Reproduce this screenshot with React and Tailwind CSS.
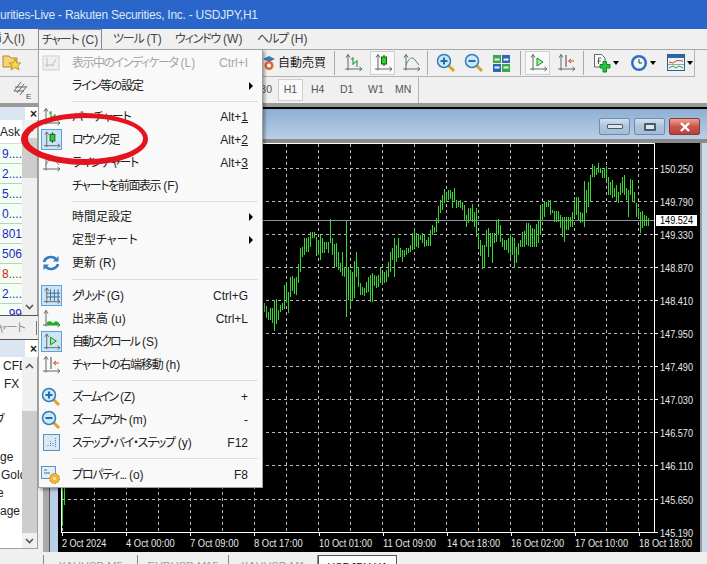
import React from "react";

const jp = "font-['Liberation_Sans','Noto_Sans_CJK_JP',sans-serif] [font-feature-settings:'palt']";

const raw1 = [[14,490,515],[20,498,535],[26,515,540],[32,505,540],[38,505,550],[44,480,572],[50,478,552],[56,510,540],[62,495,515],[68,490,510],[74,435,508],[80,425,490],[86,455,518],[92,410,470],[98,408,452],[104,415,462],[110,410,465],[116,372,428],[122,325,395],[128,320,350],[134,295,345],[140,295,335],[146,290,335],[152,277,320],[158,277,295],[164,277,295],[170,290,348],[176,300,345],[182,285,360],[188,295,340],[194,305,340],[200,305,328],[206,305,340],[212,237,310],[218,295,345],[224,312,380],[230,310,380],[236,335,390],[242,370,395],[248,335,408],[254,380,410],[260,243,530],[266,380,480],[272,390,502],[278,395,480],[284,362,475],[290,335,410],[296,380,440],[302,430,465],[308,440,465],[314,445,468],[320,425,460],[326,410,455],[332,405,485],[338,400,485],[344,405,438],[350,408,445],[356,405,440],[362,385,430],[368,400,432],[374,395,430],[380,390,425],[386,365,410],[392,335,395],[398,325,360],[404,295,412],[410,315,365],[416,295,355],[422,325,350],[428,330,365],[434,330,350],[440,325,345],[446,325,340],[452,315,335],[458,280,330],[464,268,325],[470,280,320],[476,285,325],[482,285,300],[488,280,310],[494,285,320],[500,300,318],[506,290,318],[512,270,318],[518,255,285],[524,260,280],[530,235,275],[536,198,250],[542,180,220],[548,165,210],[554,148,190],[560,155,185],[566,150,180],[572,150,178],[578,155,205],[584,145,185],[590,180,205],[596,185,200],[602,180,205],[608,185,210],[614,195,240],[620,225,260],[626,205,250],[632,205,240],[638,192,245],[644,215,262],[650,205,290],[656,280,322]];
const raw2 = [[0,300,348],[6,315,388],[12,315,385],[18,270,320],[24,265,350],[30,280,320],[36,280,368],[42,280,310],[48,240,305],[54,238,285],[60,255,305],[66,295,320],[72,300,330],[78,300,330],[84,295,340],[90,282,355],[96,290,345],[102,295,385],[108,320,370],[114,310,345],[120,300,320],[126,275,320],[132,272,320],[138,248,315],[144,250,318],[150,255,320],[156,265,320],[162,268,322],[168,252,322],[174,240,310],[180,195,285],[186,195,240],[192,183,230],[198,185,200],[204,180,200],[210,180,225],[216,210,220],[222,213,245],[228,212,245],[234,213,245],[240,225,265],[246,230,290],[252,232,305],[258,230,270],[264,232,270],[270,232,260],[276,215,260],[282,170,230],[288,170,225],[294,170,240],[300,215,250],[306,220,245],[312,122,262],[318,150,218],[324,125,200],[330,105,185],[336,72,112],[342,78,110],[348,85,105],[354,70,100],[360,85,100],[366,90,115],[372,85,115],[378,78,120],[384,110,165],[390,125,165],[396,120,175],[402,145,170],[408,135,185],[414,155,190],[420,130,165],[426,110,160],[432,105,165],[438,145,180],[444,150,232],[450,118,165],[456,120,185],[462,155,190],[468,190,232],[474,205,235],[480,215,278],[486,212,265],[492,225,258],[498,228,258],[504,235,258]];

const bars = [
  [62, 488, 526],
  [64, 488, 505],
  ...raw1.map(([x, a, b]) => [260 + x / 3, 140 + a / 3, 140 + b / 3]),
  ...raw2.map(([x, a, b]) => [480 + x / 3, 140 + a / 3, 140 + b / 3]),
];

const prices = ["150.250","149.790","149.330","148.870","148.410","147.950","147.490","147.030","146.570","146.110","145.650","145.190"];
const times = [["2 Oct 2024",61],["4 Oct 00:00",125],["7 Oct 09:00",189],["8 Oct 17:00",253],["10 Oct 01:00",318],["11 Oct 09:00",382],["14 Oct 18:00",446],["16 Oct 02:00",510],["17 Oct 10:00",574],["18 Oct 18:00",638]];
const vlines = Array.from({ length: 19 }, (_, i) => 62.5 + i * 32);

function Chart() {
  return (
    <svg width="642" height="409" viewBox="58 143 642 409" className="block shrink-0" style={{ fontFamily: "'Liberation Sans', sans-serif" }}>
      <rect x="58" y="143" width="642" height="409" fill="#000" />
      {vlines.map((x) => (
        <line key={x} x1={x} x2={x} y1="144" y2="532" stroke="#b8b8b8" strokeDasharray="3 3" />
      ))}
      {prices.map((_, i) => {
        const y = Math.round(168 + i * 33.05) + 0.5;
        return <line key={i} x1="62" x2="654" y1={y} y2={y} stroke="#b8b8b8" strokeDasharray="3 3" />;
      })}
      <line x1="62" x2="654" y1="220.5" y2="220.5" stroke="#8a94a0" />
      <path d={bars.map(([x, a, b]) => `M${Math.floor(x / 2) * 2 + 0.5} ${Math.round(a)}V${Math.round(b)}`).join("")} stroke="#33d92f" fill="none" />
      <rect x="61.5" y="143.5" width="593" height="389" fill="none" stroke="#fff" />
      {prices.map((p, i) => {
        const y = Math.round(168 + i * 33.05) + 0.5;
        return (
          <g key={p}>
            <line x1="654" x2="658" y1={y} y2={y} stroke="#fff" />
            <text x="660" y={y + 4} fill="#e8e8e8" fontSize="10" textLength="33" lengthAdjust="spacingAndGlyphs">{p}</text>
          </g>
        );
      })}
      <rect x="656" y="215" width="41" height="11" fill="#fff" />
      <text x="660" y="224" fill="#000" fontSize="10" textLength="33" lengthAdjust="spacingAndGlyphs">149.524</text>
      {times.map(([t, x]) => (
        <g key={t}>
          <line x1={x + 1.5} x2={x + 1.5} y1="532" y2="536" stroke="#fff" />
          <text x={x + 1} y="547" fill="#e8e8e8" fontSize="10" textLength={t.length * 4.42} lengthAdjust="spacingAndGlyphs">{t}</text>
        </g>
      ))}
    </svg>
  );
}

const Axis = ({ children, c = "#5a6a6a" }) => (
  <svg width="20" height="20" viewBox="0 0 20 20" fill="none">
    <path d="M5 1.5V17.5M2 16H19M3 4.5L5 1.5L7 4.5M16.5 14L19 16L16.5 18" stroke={c} strokeWidth="1" />
    {children}
  </svg>
);
const BarI = () => <Axis><path d="M10 4V12M8 6H10M10 10H12M14 7V14M12 9H14" stroke="#1c8a1c" /></Axis>;
const CandleI = () => <Axis><path d="M11 2V13" stroke="#222" /><rect x="8.5" y="4" width="5" height="7" fill="#2bd42b" stroke="#145a14" /></Axis>;
const LineI = () => <Axis><path d="M5 12C8 5 11 3 14 7L18 12" stroke="#5a8a5a" /></Axis>;
const GridI = () => <Axis><path d="M9 3V15M13 3V15M17 3V15M5 7H19M5 11H19" stroke="#3a6a8a" /></Axis>;
const VolI = () => <Axis><path d="M6 16V13L9 12L12 14L15 12L18 14V16Z" fill="#19b319" /></Axis>;
const AutoI = () => <Axis><path d="M9 5V13L15 9Z" fill="#9bf09b" stroke="#1c8a1c" /></Axis>;
const ShiftI = () => <Axis><path d="M10 2V14" stroke="#444" /><path d="M18 8H13M15 6L12.5 8L15 10" stroke="#d2401c" /></Axis>;

const ZoomI = ({ minus }) => (
  <svg width="20" height="20" viewBox="0 0 20 20" fill="none">
    <path d="M12 12L18 18" stroke="#d6a52a" strokeWidth="3" />
    <circle cx="8" cy="8" r="6.5" fill="#cfe8f8" stroke="#2f7fb8" strokeWidth="1.5" />
    <path d={minus ? "M4.5 8H11.5" : "M4.5 8H11.5M8 4.5V11.5"} stroke="#1f6ea8" strokeWidth="2" />
  </svg>
);
const TileI = () => (
  <svg width="17" height="17" viewBox="0 0 17 17">
    <rect width="8" height="8" fill="#3da84a" /><rect x="9" width="8" height="8" fill="#2f66b8" />
    <rect y="9" width="8" height="8" fill="#2f66b8" /><rect x="9" y="9" width="8" height="8" fill="#3da84a" />
    <path d="M1.5 3.5H6.5V5.5H1.5ZM10.5 3.5H15.5V5.5H10.5ZM1.5 11.5H6.5V13.5H1.5ZM10.5 11.5H15.5V13.5H10.5Z" fill="#eef5ee" />
  </svg>
);
const RefreshI = () => (
  <svg width="18" height="18" viewBox="0 0 18 18" fill="none" stroke="#2f7fc0" strokeWidth="2.5">
    <path d="M2 8C3 3.5 10 1 14 5" /><path d="M16 10C15 14.5 8 17 4 13" />
    <path d="M16.5 2V7.5H11Z" fill="#2f7fc0" stroke="none" /><path d="M1.5 16V10.5H7Z" fill="#2f7fc0" stroke="none" />
  </svg>
);
const StepI = () => (
  <svg width="17" height="17" viewBox="0 0 17 17" fill="none">
    <rect x="0.5" y="0.5" width="16" height="16" fill="#dce9f6" stroke="#5a8fc4" />
    <path d="M5 11V13M7.5 7V13M10 9V13M12.5 4V13" stroke="#4a7fb5" strokeDasharray="1 1" />
  </svg>
);
const PropI = () => (
  <svg width="20" height="20" viewBox="0 0 20 20" fill="none">
    <rect x="0.5" y="1.5" width="14" height="12" fill="#e2eefa" stroke="#5a8fc4" />
    <path d="M3 5H6M3 8H9" stroke="#3a6fa5" />
    <circle cx="13.5" cy="13.5" r="5" fill="#efb52e" stroke="#c98a14" strokeDasharray="2 1" />
    <circle cx="13.5" cy="13.5" r="1.8" fill="#f8e4a8" />
  </svg>
);
const IndI = () => (
  <svg width="18" height="18" viewBox="0 0 18 18" fill="none" opacity="0.45">
    <rect x="1" y="2" width="16" height="14" fill="#e6e6e6" stroke="#9a9a9a" />
    <path d="M5 4V13M3 11H12M10 12L14 5" stroke="#777" />
  </svg>
);
const FolderI = () => (
  <svg width="20" height="20" viewBox="0 0 20 20">
    <path d="M1 3H7L9 5H15V14H1Z" fill="#f3d37a" stroke="#b8862a" />
    <path d="M13 6L14.8 10H19L15.7 12.6L17 17L13 14.4L9 17L10.3 12.6L7 10H11.2Z" fill="#f6d84a" stroke="#c09a20" />
  </svg>
);
const RobotI = () => (
  <svg width="14" height="16" viewBox="0 0 14 16">
    <path d="M1 4L7 1L13 4L7 7Z" fill="#3b78b8" />
    <circle cx="7" cy="10.5" r="4.5" fill="#e2622a" /><circle cx="7" cy="10.5" r="2" fill="#fff" />
  </svg>
);
const NewI = () => (
  <svg width="18" height="20" viewBox="0 0 18 20" fill="none">
    <path d="M1.5 1.5H8.5L12 5V14H1.5Z" fill="#fafafa" stroke="#666" />
    <path d="M5.5 11V5H8M4.5 8H7.5" stroke="#555" />
    <path d="M7 11.5H10V8.5H13.5V11.5H17V15H13.5V19H10V15H7Z" fill="#22c73a" stroke="#0f8a22" />
  </svg>
);
const ClockI = () => (
  <svg width="18" height="18" viewBox="0 0 18 18" fill="none">
    <circle cx="9" cy="9" r="8" fill="#2a72c0" />
    <circle cx="9" cy="9" r="5.5" fill="#f2f6fb" />
    <path d="M9 5V9H12" stroke="#333" />
  </svg>
);
const IndI2 = () => (
  <svg width="18" height="18" viewBox="0 0 18 18" fill="none">
    <rect x="0.5" y="0.5" width="17" height="16" fill="#eef3f7" stroke="#2f5f96" />
    <rect x="1" y="1" width="16" height="3" fill="#2f66a8" />
    <path d="M2 8L6 9L10 6.5L16 7" stroke="#c64c2a" /><path d="M2 14L6 12L9 14L12 12L16 14" stroke="#3a9a3a" />
    <path d="M1 10.5H17" stroke="#8aa" />
  </svg>
);
const Caret = ({ cls = "ml-[2px]" }) => <span className={`${cls} h-0 w-0 border-x-[3px] border-t-[4px] border-x-transparent border-t-black`} />;
const Sep = ({ cls = "" }) => <span className={`h-[24px] w-px bg-[#a8a8a8] ${cls}`} />;
const Active = ({ children, w = "w-[25px]", h = "h-[24px]" }) => (
  <span className={`flex ${w} ${h} items-center justify-center border border-[#cfcfcf] bg-[#f9f9f9]`}>{children}</span>
);

const Row = ({ icon, label, hint, right, muted, arrow, boxed, tr = "" }) => (
  <div className={`flex h-[23px] items-center ${muted ? "text-[#a6a6a6]" : "text-[#222]"}`}>
    <span className="flex w-[24px] shrink-0 items-center justify-center">
      {icon && (
        <span className={`flex h-[21px] w-[21px] items-center justify-center ${boxed ? "border border-[#5aa3dc] bg-[#cde4f7]" : ""}`}>{icon}</span>
      )}
    </span>
    <span className="ml-[9px] flex-1 whitespace-pre"><span className={tr}>{label}</span>{hint && <span className="ml-[3px]">{hint}</span>}</span>
    {right && <span className="mr-[14px] whitespace-nowrap">{right}</span>}
    {arrow && <span className="mr-[9px] h-0 w-0 border-y-[4px] border-l-[4px] border-y-transparent border-l-black" />}
  </div>
);
const MenuSep = ({ cls }) => (
  <div className={`flex ${cls} items-center pl-[33px] pr-[4px]`}><div className="h-px w-full bg-[#dcdcdc]" /></div>
);

function ChartMenu() {
  return (
    <div className={`absolute left-[38px] top-[49px] h-[439px] w-[225px] border border-[#a0a0a0] bg-[#f9f9f9] pt-px text-[12px] shadow-[2px_2px_3px_rgba(0,0,0,0.35)] ${jp}`}>
      <Row muted icon={<IndI />} tr="tracking-[-1.5px]" label="表示中のインディケータ" hint="(L)" right="Ctrl+I" />
      <Row tr="tracking-[-1.2px]" label="ライン等の設定" arrow />
      <MenuSep cls="h-[8px]" />
      <Row icon={<BarI />} tr="tracking-[-1px]" label="バーチャート" right={<>Alt+<u>1</u></>} />
      <Row icon={<CandleI />} boxed tr="tracking-[-1.7px]" label="ロウソク足" right={<>Alt+<u>2</u></>} />
      <Row icon={<LineI />} tr="tracking-[-1px]" label="ラインチャート" right={<>Alt+<u>3</u></>} />
      <Row tr="tracking-[-1.4px]" label="チャートを前面表示" hint="(F)" />
      <MenuSep cls="h-[8px]" />
      <Row label="時間足設定" arrow />
      <Row label="定型チャート" arrow />
      <Row icon={<RefreshI />} label="更新" hint="(R)" />
      <MenuSep cls="h-[10px]" />
      <Row icon={<GridI />} boxed tr="tracking-[-2px]" label="グリッド" hint="(G)" right="Ctrl+G" />
      <Row icon={<VolI />} label="出来高" hint="(u)" right="Ctrl+L" />
      <Row icon={<AutoI />} boxed tr="tracking-[-1.9px]" label="自動スクロール" hint="(S)" />
      <Row icon={<ShiftI />} tr="tracking-[-1.2px]" label="チャートの右端移動" hint="(h)" />
      <MenuSep cls="h-[9px]" />
      <Row icon={<ZoomI />} tr="tracking-[-2px]" label="ズームイン" hint="(Z)" right="+" />
      <Row icon={<ZoomI minus />} tr="tracking-[-1.9px]" label="ズームアウト" hint="(m)" right="-" />
      <Row icon={<StepI />} tr="tracking-[-1.3px]" label="ステップ・バイ・ステップ" hint="(y)" right="F12" />
      <MenuSep cls="h-[9px]" />
      <Row icon={<PropI />} tr="tracking-[-1.2px]" label="プロパティ..." hint="(o)" right="F8" />
    </div>
  );
}

const ChevUp = () => <svg width="9" height="6" viewBox="0 0 9 6" fill="none"><path d="M1 5L4.5 1.5L8 5" stroke="#555" strokeWidth="1.6" /></svg>;
const ChevDown = () => <svg width="9" height="6" viewBox="0 0 9 6" fill="none"><path d="M1 1L4.5 4.5L8 1" stroke="#555" strokeWidth="1.6" /></svg>;

const asks = [["9....","#1f1fc8"],["2....","#1f1fc8"],["5....","#1f1fc8"],["0....","#1f1fc8"],["801","#1f1fc8"],["506","#1f1fc8"],["8....","#d01818"],["2....","#1f1fc8"],["99","#1f1fc8"]];

function Panel() {
  return (
    <div className={`flex w-[38px] shrink-0 flex-col overflow-hidden bg-[#f0f0f0] text-[12px] text-[#222] ${jp}`}>
      <div className="flex h-[13px] shrink-0 items-center bg-white">
        <div className="h-full w-[25px] bg-[#dbe6f2]" />
        <span className="ml-[5px] text-[12px] font-bold leading-none">×</span>
      </div>
      <div className="flex h-[195px] shrink-0 overflow-hidden">
        <div className="w-[22px] overflow-hidden bg-white">
          <div className="flex h-[24px] items-center border-b border-[#d8d8d8] whitespace-nowrap">Ask</div>
          {asks.map(([a, c], i) => (
            <div key={i} className="flex h-[20px] items-center justify-end border-b border-[#c8c8c8] bg-[#f4fff4] whitespace-nowrap" style={{ color: c }}>{a}</div>
          ))}
        </div>
        <div className="flex w-[15px] flex-col items-center bg-[#f0f0f0]">
          <div className="flex h-[18px] shrink-0 items-center"><ChevUp /></div>
          <div className="h-[40px] w-full bg-[#cdcdcd]" />
          <div className="flex-1" />
          <div className="flex h-[17px] shrink-0 items-center"><ChevDown /></div>
        </div>
        <div className="w-px bg-[#a0a0a0]" />
      </div>
      <div className="flex h-[25px] shrink-0 items-center border-y border-[#555] bg-[#f0f0f0] text-[#999]">
        <span className="flex w-[25px] justify-end overflow-hidden whitespace-nowrap tracking-[-1px]">ャート</span>
        <span className="ml-[11px] h-[14px] w-px bg-[#777]" />
      </div>
      <div className="flex h-[17px] shrink-0 items-center bg-white">
        <div className="h-full w-[25px] bg-[#dbe6f2]" />
        <span className="ml-[5px] text-[12px] font-bold leading-none">×</span>
      </div>
      <div className="flex h-[191px] shrink-0 overflow-hidden bg-white">
        <div className="w-[22px] overflow-hidden leading-[18.2px]">
          <div className="ml-[3px] whitespace-nowrap">CFD</div>
          <div className="ml-[4px]">FX</div>
          <div className="h-[18px]" />
          <div className="-ml-[6px]">ブ</div>
          <div className="h-[18px]" />
          <div>ge</div>
          <div className="ml-px whitespace-nowrap">Gold</div>
          <div className="-ml-[3px]">e</div>
          <div>age</div>
        </div>
        <div className="flex w-[15px] flex-col items-center bg-[#f0f0f0]">
          <div className="flex h-[18px] shrink-0 items-center"><ChevUp /></div>
          <div className="h-[36px] shrink-0" />
          <div className="h-[122px] w-full shrink-0 bg-[#cdcdcd]" />
          <div className="flex h-[15px] shrink-0 items-center"><ChevDown /></div>
        </div>
        <div className="w-px bg-[#a0a0a0]" />
      </div>
      <div className="flex-1 border-t border-[#a0a0a0]" />
    </div>
  );
}

const WinBtn = ({ children, red }) => (
  <span className={`flex h-[17px] w-[31px] items-center justify-center rounded-[2px] border ${red ? "border-[#8a3a34] bg-gradient-to-b from-[#e8a49a] via-[#c9574a] to-[#b8403a]" : "border-[#6f8cad] bg-gradient-to-b from-[#d3e0ee] via-[#aec4dc] to-[#a3bcd6]"}`}>{children}</span>
);

function ChartWindow() {
  return (
    <div className="ml-[5px] flex min-w-0 flex-1 flex-col bg-[#a9a9a9] pl-[6px]">
      <div className="flex flex-1 flex-col border-l border-l-[#555] border-t-2 border-t-black">
        <div className="flex h-[30px] shrink-0 items-start justify-end gap-[4px] bg-gradient-to-b from-[#8eafd2] to-[#b9cfe7] pr-[7px] pt-[9px]">
          <WinBtn><span className="h-[5px] w-[16px] rounded-[1px] border border-[#4a5a6a] bg-[#dfe6ee]" /></WinBtn>
          <WinBtn><span className="h-[8px] w-[12px] rounded-[1px] border-2 border-[#4a5a6a] bg-[#dfe6ee]" /></WinBtn>
          <WinBtn red><svg width="12" height="10" viewBox="0 0 12 10"><path d="M2 1L10 9M10 1L2 9" stroke="#fff" strokeWidth="2.4" /></svg></WinBtn>
        </div>
        <div className="flex flex-1 border-t-4 border-t-[#8a8a8a]">
          <div className="w-[8px] shrink-0 bg-[#b9cfe7]" />
          <Chart />
          <div className="flex-1 border-l-2 border-l-[#9a9a9a] bg-[#c8daee]" />
        </div>
      </div>
    </div>
  );
}

const Tab = ({ label, active, w }) => (
  <span className={`${w} flex h-full justify-center overflow-hidden pt-[5px] ${active ? "border-x border-t border-[#555] bg-white text-[#111]" : "border-r border-[#888] text-[#9a9a9a]"}`}>{label}</span>
);

const Mn = ({ k, h }) => (
  <><span className="tracking-[-1.2px]">{k}</span><span className="ml-[3px]">{h}</span></>
);

export default function App() {
  return (
    <div className={`relative flex h-[564px] w-[707px] flex-col overflow-hidden bg-[#f0f0f0] text-[#222] ${jp}`}>
      <div className="flex h-[29px] shrink-0 items-center overflow-hidden whitespace-nowrap bg-[#2a66c9] text-[12px] tracking-[-0.25px] text-[#dce6f5]">
        urities-Live - Rakuten Securities, Inc. - USDJPY,H1
      </div>

      <div className="flex h-[21px] shrink-0 items-center whitespace-nowrap border-b border-[#a8a8a8] bg-[#f0f0f0] text-[12px] text-[#444]">
        <span className="flex w-[25px] justify-end overflow-hidden">挿入(I)</span>
        <span className="ml-[13px] flex h-full w-[64px] items-center justify-center border-x border-t border-[#888]"><Mn k="チャート" h="(C)" /></span>
        <span className="ml-[11px] w-[44px]"><Mn k="ツール" h="(T)" /></span>
        <span className="ml-[18px] w-[65px]"><Mn k="ウィンドウ" h="(W)" /></span>
        <span className="ml-[17px]"><Mn k="ヘルプ" h="(H)" /></span>
      </div>

      <div className="flex h-[27px] w-[695px] shrink-0 items-center border-r border-b border-[#b4b4b4] bg-[#f0f0f0]">
        <span className="ml-[2px] flex"><FolderI /></span>
        <div className="ml-[240px] flex items-center">
          <RobotI />
          <span className="ml-[2px] w-[49px] text-[12px] text-[#222]">自動売買</span>
          <Sep cls="ml-[7px]" />
          <span className="ml-[8px] w-[27px]"><BarI /></span>
          <Active><CandleI /></Active>
          <span className="ml-[6px]"><LineI /></span>
          <Sep cls="ml-[6px]" />
          <span className="ml-[8px]"><ZoomI /></span>
          <span className="ml-[8px]"><ZoomI minus /></span>
          <span className="ml-[9px]"><TileI /></span>
          <Sep cls="ml-[10px]" />
          <span className="ml-[4px]"><Active><AutoI /></Active></span>
          <span className="ml-[6px]"><ShiftI /></span>
          <Sep cls="ml-[7px]" />
          <span className="ml-[9px] flex items-center"><NewI /><Caret /></span>
          <span className="ml-[11px] flex items-center"><ClockI /><Caret /></span>
          <span className="ml-[11px] flex items-center"><IndI2 /><Caret /></span>
        </div>
      </div>

      <div className="flex h-[30px] shrink-0 items-center border-b-4 border-[#9a9a9a] bg-[#f0f0f0] text-[10.5px] text-[#555]">
        <span className="ml-[13px] text-[#555]">
          <svg width="20" height="20" viewBox="0 0 20 20" fill="none" stroke="#666">
            <path d="M1 11L8 2M4 13L11 4M7 15L14 6M2 7H13M1 11H11" />
            <text x="13" y="19" fontSize="8" fill="#444" stroke="none">E</text>
          </svg>
        </span>
        <span className="ml-[209px] w-[30px] text-right">30</span>
        <span className="ml-[6px]"><Active w="w-[25px]" h="h-[22px]">H1</Active></span>
        <span className="ml-[8px] w-[15px]">H4</span>
        <span className="ml-[14px] w-[14px]">D1</span>
        <span className="ml-[14px] w-[14px]">W1</span>
        <span className="ml-[13px] w-[15px]">MN</span>
        <span className="ml-[8px] h-[26px] w-px bg-[#b4b4b4]" />
      </div>

      <div className="flex h-[445px] shrink-0">
        <Panel />
        <ChartWindow />
      </div>

      <div className="flex h-[12px] shrink-0 items-end bg-[#f0f0f0] text-[11px] leading-[12px]">
        <div className="ml-[43px] flex h-[9px] border-l border-[#888]">
          <Tab w="w-[94px]" label="XAUUSD M5" />
          <Tab w="w-[91px]" label="EURUSD M15" />
          <Tab w="w-[89px]" label="XAUUSD M1" />
          <Tab w="w-[79px]" active label="USDJPY H1" />
        </div>
      </div>

      <ChartMenu />

      <svg className="pointer-events-none absolute left-[16px] top-[108px]" width="136" height="62" viewBox="16 108 136 62">
        <path fillRule="evenodd" fill="#e3141f" d="M21 139A63.5 26 0 1 1 148 139A63.5 26 0 1 1 21 139ZM28 138.5A57.5 20.5 0 1 0 143 138.5A57.5 20.5 0 1 0 28 138.5Z" />
      </svg>
    </div>
  );
}
